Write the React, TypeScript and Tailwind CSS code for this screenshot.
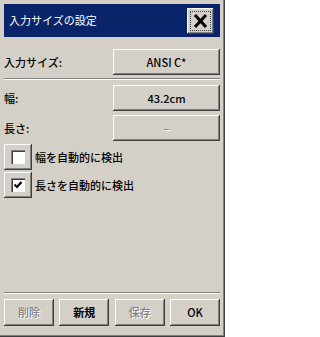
import React from "react";

const raised =
  "bg-[#d4d0c8] shadow-[inset_-1px_-1px_#404040,inset_1px_1px_#ffffff,inset_-2px_-2px_#808080]";

function Btn({
  label,
  disabled,
  bold,
  className = "",
}: {
  label: string;
  disabled?: boolean;
  bold?: boolean;
  className?: string;
}) {
  return (
    <div
      className={`${raised} flex items-center justify-center text-[11px] ${
        bold ? "font-bold" : "font-medium"
      } ${
        disabled
          ? "text-[#808080] [text-shadow:1px_1px_#ffffff]"
          : "text-black"
      } ${className}`}
    >
      {label}
    </div>
  );
}

function Check({ checked, label }: { checked?: boolean; label: string }) {
  return (
    <div className="flex items-center gap-[3px]">
      <div className={`${raised} w-[28px] h-[26px] flex items-center justify-center`}>
        <div className="w-[14px] h-[14px] bg-white shadow-[inset_1px_1px_#808080,inset_2px_2px_#404040,inset_-1px_-1px_#ffffff] flex items-center justify-center">
          {checked && (
            <svg width="10" height="10" viewBox="0 0 10 10">
              <path d="M1.5 4.5 L4 7 L8.5 2" fill="none" stroke="#000" strokeWidth="2.2" />
            </svg>
          )}
        </div>
      </div>
      <span className="text-[11px] font-medium text-black">{label}</span>
    </div>
  );
}

export default function App() {
  return (
    <div
      className="w-[225px] h-[337px] bg-[#d4d0c8] pt-[4px] pl-[4px] pr-[5px] flex flex-col shadow-[inset_-1px_-1px_#404040,inset_-2px_-2px_#808080]"
      style={{ fontFamily: '"Noto Sans CJK JP", "Liberation Sans", sans-serif' }}
    >
      {/* Title bar */}
      <div className="h-[33px] bg-[#0a246a] flex items-center justify-between pl-[5px] pr-[6px]">
        <span className="text-white text-[11px]">入力サイズの設定</span>
        <div className={`${raised} w-[27px] h-[26px] p-[3px]`}>
          <div className="w-full h-full border border-dotted border-[#404040] flex items-center justify-center">
            <svg width="15" height="14" viewBox="0 0 15 14">
              <path d="M2 1 L13 13 M13 1 L2 13" stroke="#000" strokeWidth="3" />
            </svg>
          </div>
        </div>
      </div>

      {/* Input size */}
      <div className="mt-[12px] flex items-center justify-between">
        <span className="text-[11px] font-medium text-black">入力サイズ:</span>
        <Btn label="ANSI C*" className="w-[107px] h-[26px]" />
      </div>

      <div className="mt-[3px] h-[2px] border-t border-[#808080] border-b border-b-white" />

      {/* Width / length */}
      <div className="mt-[5px] flex items-center justify-between">
        <span className="text-[11px] font-medium text-black">幅:</span>
        <Btn label="43.2cm" className="w-[107px] h-[26px]" />
      </div>
      <div className="mt-[4px] flex items-center justify-between">
        <span className="text-[11px] font-medium text-black">長さ:</span>
        <Btn label="–" disabled className="w-[107px] h-[26px]" />
      </div>

      {/* Auto detect */}
      <div className="mt-[3px] flex flex-col gap-[2px]">
        <Check label="幅を自動的に検出" />
        <Check checked label="長さを自動的に検出" />
      </div>

      <div className="flex-1" />

      <div className="h-[2px] border-t border-[#808080] border-b border-b-white" />

      {/* Bottom buttons */}
      <div className="mt-[5px] mb-[11px] flex justify-between">
        <Btn label="削除" disabled className="w-[50px] h-[27px]" />
        <Btn label="新規" bold className="w-[50px] h-[27px]" />
        <Btn label="保存" disabled className="w-[50px] h-[27px]" />
        <Btn label="OK" className="w-[50px] h-[27px]" />
      </div>
    </div>
  );
}
